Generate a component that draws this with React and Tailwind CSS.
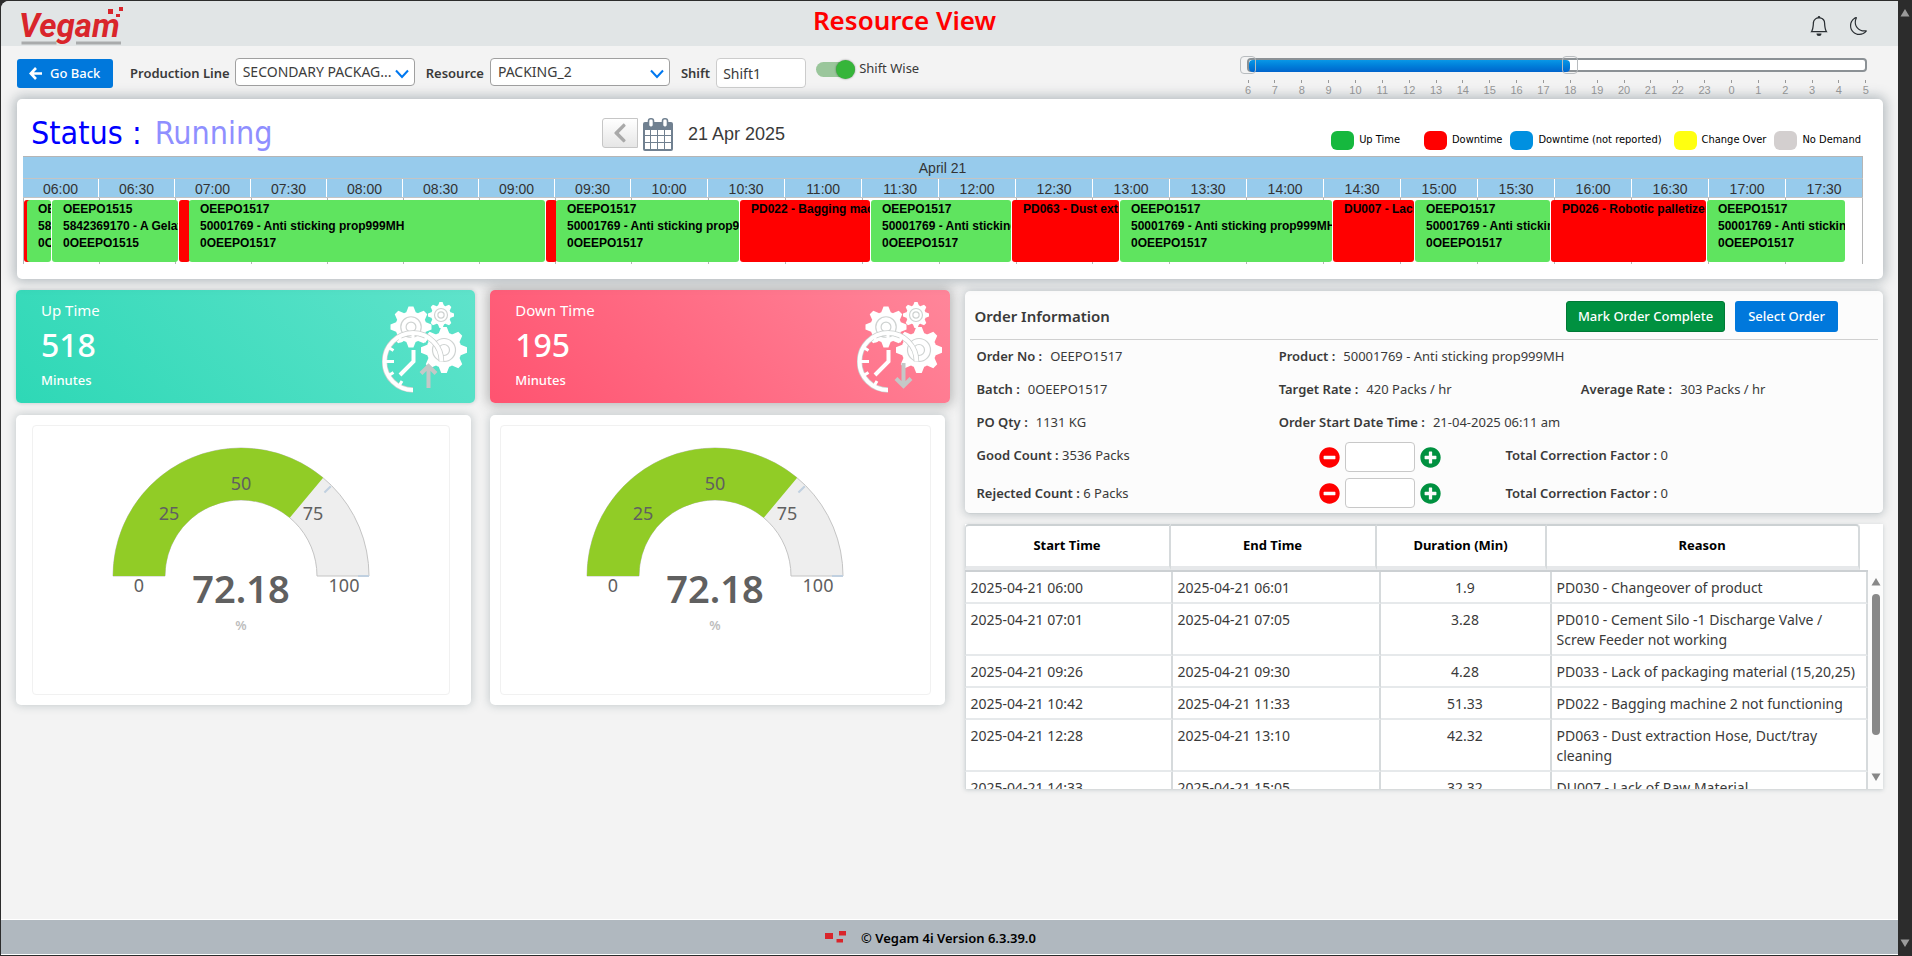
import React, { useState } from "react";
import { FaChevronLeft, FaMinusCircle, FaPlusCircle } from "react-icons/fa";
import { BsBell, BsMoon } from "react-icons/bs";

const HOURS = [6, 7, 8, 9, 10, 11, 12, 13, 14, 15, 16, 17, 18, 19, 20, 21, 22, 23, 0, 1, 2, 3, 4, 5];

const SLOTS = [
  "06:00", "06:30", "07:00", "07:30", "08:00", "08:30", "09:00", "09:30",
  "10:00", "10:30", "11:00", "11:30", "12:00", "12:30", "13:00", "13:30",
  "14:00", "14:30", "15:00", "15:30", "16:00", "16:30", "17:00", "17:30",
];

const PO_1517 = ["OEEPO1517", "50001769 - Anti sticking prop999MH", "0OEEPO1517"];
const PO_1515 = ["OEEPO1515", "5842369170 - A Gelatine", "0OEEPO1515"];

// from / to are on a 0-1840 scale, which is the full shift
const EVENTS = [
  { from: 1, to: 4, type: "down", lines: [] },
  { from: 4, to: 28, type: "up", lines: PO_1515 },
  { from: 29, to: 155, type: "up", lines: PO_1515 },
  { from: 156, to: 166, type: "down", lines: [] },
  { from: 166, to: 522, type: "up", lines: PO_1517 },
  { from: 523, to: 533, type: "down", lines: [] },
  { from: 533, to: 716, type: "up", lines: PO_1517 },
  { from: 717, to: 847, type: "down", lines: ["PD022 - Bagging machine 2 not functioning"] },
  { from: 848, to: 988, type: "up", lines: PO_1517 },
  { from: 989, to: 1096, type: "down", lines: ["PD063 - Dust extraction Hose"] },
  { from: 1097, to: 1309, type: "up", lines: PO_1517 },
  { from: 1310, to: 1391, type: "down", lines: ["DU007 - Lack of Raw Material"] },
  { from: 1392, to: 1527, type: "up", lines: PO_1517 },
  { from: 1528, to: 1683, type: "down", lines: ["PD026 - Robotic palletizer"] },
  { from: 1684, to: 1822, type: "up", lines: PO_1517 },
];

const LEGEND = [
  { label: "Up Time", color: "bg-[#16b83e]", space: "mr-6" },
  { label: "Downtime", color: "bg-[#ff0000]", space: "mr-2" },
  { label: "Downtime (not reported)", color: "bg-[#0090e0]", space: "mr-3" },
  { label: "Change Over", color: "bg-[#ffff10]", space: "mr-2" },
  { label: "No Demand", color: "bg-[#d3cfcf]", space: "" },
];

const DOWNTIMES = [
  ["2025-04-21 06:00", "2025-04-21 06:01", "1.9", "PD030 - Changeover of product"],
  ["2025-04-21 07:01", "2025-04-21 07:05", "3.28", "PD010 - Cement Silo -1 Discharge Valve / Screw Feeder not working"],
  ["2025-04-21 09:26", "2025-04-21 09:30", "4.28", "PD033 - Lack of packaging material (15,20,25)"],
  ["2025-04-21 10:42", "2025-04-21 11:33", "51.33", "PD022 - Bagging machine 2 not functioning"],
  ["2025-04-21 12:28", "2025-04-21 13:10", "42.32", "PD063 - Dust extraction Hose, Duct/tray cleaning"],
  ["2025-04-21 14:33", "2025-04-21 15:05", "32.32", "DU007 - Lack of Raw Material"],
];

const Logo = () => (
  <svg width="106" height="44" viewBox="0 0 106 44" aria-label="Vegam">
    <path d="M0.500 38.500h35v3h-35zM55 38.500h45v3h-45z" fill="#a9abac" />
    <text x="-2" y="34" fontFamily="Roboto, sans-serif" fontSize="33" fontWeight="700" fontStyle="italic" fill="#d9252b">
      Vegam
    </text>
    <path d="M87 6h5v5h-5zM98 4h4v4h-4zM95 11h4v3h-4z" fill="#d9252b" />
  </svg>
);

const BackArrow = () => (
  <svg width="13" height="13" viewBox="0 0 13 13" fill="none" stroke="#fff" strokeWidth="2.600">
    <path d="M7 1L1.800 6.500 7 12M2 6.500h11" />
  </svg>
);

const CalendarIcon = () => (
  <svg width="30" height="33" viewBox="0 0 30 33">
    <path fill="#708090" fillRule="evenodd" d="M2 4h26a2 2 0 0 1 2 2v25a2 2 0 0 1-2 2H2a2 2 0 0 1-2-2V6a2 2 0 0 1 2-2zM2 12v5h5v-5zM8 12v5h6v-5zM15 12v5h6v-5zM22 12v5h6v-5zM2 18v6h5v-6zM8 18v6h6v-6zM15 18v6h6v-6zM22 18v6h6v-6zM2 25v6h5v-6zM8 25v6h6v-6zM15 25v6h6v-6zM22 25v6h6v-6z" />
    <rect x="5.500" y="0.800" width="5" height="8.500" rx="2.200" fill="#fff" stroke="#708090" strokeWidth="1.600" />
    <rect x="19.500" y="0.800" width="5" height="8.500" rx="2.200" fill="#fff" stroke="#708090" strokeWidth="1.600" />
  </svg>
);

const Gear = ({ cx, cy, r }) => {
  const angles = [0, 45, 90, 135, 180, 225, 270, 315];
  return (
    <g transform={`translate(${cx} ${cy})`}>
      <circle r={r * 0.76} fill="#fff" />
      {angles.map((a) => (
        <path
          key={a}
          transform={`rotate(${a})`}
          d={`M${-r * 0.24} ${-r * 0.7}L${-r * 0.12} ${-r}H${r * 0.12}L${r * 0.24} ${-r * 0.7}z`}
          fill="#fff"
        />
      ))}
      <circle r={r * 0.5} fill="none" stroke="#cfd3d2" strokeWidth="1.200" />
      <circle r={r * 0.24} fill="none" stroke="#cfd3d2" strokeWidth="1.200" />
    </g>
  );
};

const ClockGears = ({ direction }) => (
  <svg width="86" height="92" viewBox="0 0 86 92" fill="none">
    <Gear cx={29} cy={25} r={20.5} />
    <Gear cx={59} cy={13} r={13} />
    <Gear cx={62} cy={48} r={23} />
    <path d="M31 88A28.500 28.500 0 1 1 59.500 59.500" stroke="#c9cdcc" strokeWidth="5.500" />
    <path d="M31 88A28.500 28.500 0 1 1 59.500 59.500" stroke="#fff" strokeWidth="4" />
    <path d="M31 33v8M3 59.500h9M6.500 45.500l5 3M17 35l3 5M45 35l-3 5M6.500 73.500l5-3M17 84l3-5" stroke="#fff" strokeWidth="3" />
    <path d="M31.500 48v11.500L18 73" stroke="#fff" strokeWidth="4" />
    {direction === "up" ? (
      <path d="M46.500 86V64M39 71.500l7.500-7.500 7.500 7.500" stroke="#c4c8c7" strokeWidth="4" />
    ) : (
      <path d="M46.500 61v23M39 76.500l7.500 7.500 7.500-7.500" stroke="#c4c8c7" strokeWidth="4" />
    )}
  </svg>
);

const StatCard = ({ title, value, direction, className }) => (
  <div className={`flex justify-between rounded-[5px] h-[113px] pl-[25px] pr-[7px] text-white ${className}`}>
    <div className="flex flex-col pt-2">
      <span className="text-[15px] leading-6">{title}</span>
      <span className="text-[32px] leading-[46px] font-medium">{value}</span>
      <span className="text-[13px] leading-6 font-medium">Minutes</span>
    </div>
    <div className="pt-3">
      <ClockGears direction={direction} />
    </div>
  </div>
);

const Gauge = ({ value }) => {
  const cx = 150;
  const cy = 150;
  const point = (r, pct) => {
    const a = Math.PI * (1 - pct / 100);
    return `${cx + r * Math.cos(a)} ${cy - r * Math.sin(a)}`;
  };
  const band = (from, to) =>
    `M${point(128, from)}A128 128 0 0 1 ${point(128, to)}L${point(76, to)}A76 76 0 0 0 ${point(76, from)}z`;

  return (
    <svg width="300" height="230" viewBox="0 0 300 230" className="mx-auto" fontFamily="'Noto Sans', sans-serif" textAnchor="middle">
      <path d={band(0, 100)} fill="#eeeeee" stroke="#c4c4c4" />
      <path d={band(0, value)} fill="#91cc26" />
      <path d={`M${point(118, 75)}L${point(127, 75)}M267 150h11`} stroke="#c0d0e0" strokeWidth="2" />
      <g fontSize="18" fill="#606060">
        <text x="48" y="166">0</text>
        <text x="78" y="94">25</text>
        <text x="150" y="64">50</text>
        <text x="222" y="94">75</text>
        <text x="253" y="166">100</text>
      </g>
      <text x="150" y="177" fontSize="38" fontWeight="600" fill="#606060">{value}</text>
      <text x="150" y="204" fontSize="13" fill="#bdbdbd" fontWeight="600">%</text>
    </svg>
  );
};

const GaugeCard = ({ className, innerClass }) => (
  <div className={`bg-white rounded-[5px] h-[290px] mt-3 pt-[10px] shadow-[0_0_8px_1px_rgba(69,90,100,0.25)] ${className}`}>
    <div className={`h-[270px] rounded border border-[#f1f1f1] ${innerClass}`}>
      <Gauge value={72.18} />
    </div>
  </div>
);

const SelectBox = ({ id, value, options }) => (
  <div className="relative w-[180px] shrink-0">
    <select
      id={id}
      defaultValue={value}
      className="appearance-none w-full h-7 rounded border border-[#a0a0a0] bg-white pl-[7px] pr-5 text-sm text-[#3c3c3c]"
    >
      {options.map((o) => (
        <option key={o}>{o}</option>
      ))}
    </select>
    <svg width="14" height="10" viewBox="0 0 14 10" className="absolute right-[6px] top-[11px] pointer-events-none">
      <path d="M1 1.500l6 6.500 6-6.500" fill="none" stroke="#0078f0" strokeWidth="2" />
    </svg>
  </div>
);

const ShiftRange = () => {
  const [from, setFrom] = useState(0);
  const [to, setTo] = useState(12);
  const rangeClass =
    "absolute left-0 top-0 w-full h-[18px] appearance-none bg-transparent pointer-events-none [&::-webkit-slider-thumb]:pointer-events-auto [&::-webkit-slider-thumb]:appearance-none [&::-webkit-slider-thumb]:w-4 [&::-webkit-slider-thumb]:h-[18px] [&::-webkit-slider-thumb]:rounded [&::-webkit-slider-thumb]:border [&::-webkit-slider-thumb]:border-[#b8bcbf]";

  return (
    <div className="w-[35%] max-w-[634px] ml-auto mr-6 -mt-0.5">
      <div className="relative py-0.5">
        <div className="h-[14px] mx-[7px] rounded border-2 border-[#8b9195] bg-white">
          <div
            className="h-3 rounded-sm bg-linear-to-b from-[#0a97e6] to-[#0064cc]"
            style={{ marginLeft: `${(from / 23) * 100}%`, width: `${((to - from) / 23) * 100}%` }}
          ></div>
        </div>
        <input type="range" aria-label="From hour" min="0" max="23" value={from} onChange={(e) => setFrom(Math.min(+e.target.value, to))} className={rangeClass} />
        <input type="range" aria-label="To hour" min="0" max="23" value={to} onChange={(e) => setTo(Math.max(+e.target.value, from))} className={rangeClass} />
      </div>
      <div className="flex justify-between mt-1.5 font-['Liberation_Sans',sans-serif] text-[11px] leading-[14px] text-[#999]">
        {HOURS.map((h) => (
          <div key={h} className="flex flex-col items-center w-4">
            <span className="w-px h-[3px] bg-[#999]"></span>
            <span>{h}</span>
          </div>
        ))}
      </div>
    </div>
  );
};

const Timeline = () => {
  // slots up to 09:30 are a touch narrower than the later ones
  const slotWidth = (i) => (i < 8 ? "flex-[76]" : "flex-[77]");

  return (
    <div className="mr-5 ml-1.5 font-['Liberation_Sans',sans-serif] text-sm text-[#333]">
      <div className="h-[22px] leading-[22px] text-center bg-[#97cbec] border-t border-r border-[#b5b5b5]">April 21</div>
      <div className="flex h-5 bg-[#97cbec] border-y border-[#c4c4c4]">
        {SLOTS.map((s, i) => (
          <div key={s} className={`${slotWidth(i)} text-center leading-5 border-r border-white last:border-[#b5b5b5]`}>{s}</div>
        ))}
      </div>
      <div className="relative h-[66px]">
        <div className="flex h-full border-l border-[#b5b5b5]">
          {SLOTS.map((s, i) => (
            <div key={s} className={`${slotWidth(i)} border-r border-[#b5b5b5]`}></div>
          ))}
        </div>
        {EVENTS.map((e) => (
          <div
            key={e.from}
            className={`absolute top-0.5 h-[62px] rounded-[3px] overflow-hidden pt-px pl-[11px] font-bold text-xs leading-[17px] text-black whitespace-nowrap ${
              e.type === "up" ? "bg-[#5fe45f]" : "bg-[#ff0000]"
            }`}
            style={{ left: `${(e.from / 1840) * 100}%`, width: `${((e.to - e.from) / 1840) * 100}%` }}
          >
            {e.lines.map((l) => (
              <div key={l}>{l}</div>
            ))}
          </div>
        ))}
      </div>
    </div>
  );
};

const Field = ({ label, children }) => (
  <div className="w-1/3 whitespace-nowrap">
    <span className="font-semibold mr-2">{label} :</span>
    <span>{children}</span>
  </div>
);

const CountRow = ({ id, label, value, className }) => (
  <div className={`flex pt-[3px] h-[35px] leading-[26px] ${className}`}>
    <label htmlFor={id} className="w-[342px]">
      <b className="font-semibold">{label} :</b> {value}
    </label>
    <div className="flex items-center gap-[5px] w-[187px]">
      <button aria-label={`Decrease ${label}`} className="text-[#ff0000]">
        <FaMinusCircle size={21} />
      </button>
      <input id={id} className="w-[70px] h-[30px] rounded border border-[#c8c8c8] bg-white" />
      <button aria-label={`Increase ${label}`} className="text-[#009140]">
        <FaPlusCircle size={21} />
      </button>
    </div>
    <span>
      <b className="font-semibold">Total Correction Factor :</b> 0
    </span>
  </div>
);

const OrderInformation = () => (
  <section className="h-[223px] rounded-[5px] border-b border-[#ccd1d3] bg-[#fcfcfc] pt-2.5 text-[13px] text-[#3a3a3a] shadow-[0_0_8px_1px_rgba(69,90,100,0.3)]">
    <div className="flex items-center mx-[5px] pl-[5px] pb-[7px] border-b border-[#d0d0d0]">
      <h2 className="flex-1 text-[15px] font-semibold">Order Information</h2>
      <button className="h-[31px] px-[11px] mr-2.5 rounded-[3px] bg-[#009140] border border-[#007a36] text-white font-medium">Mark Order Complete</button>
      <button className="h-[31px] px-[13px] mr-10 rounded-[3px] bg-[#0078dc] text-white font-medium">Select Order</button>
    </div>
    <div className="pl-3 leading-[33px]">
      <div className="flex">
        <Field label="Order No">OEEPO1517</Field>
        <Field label="Product">50001769 - Anti sticking prop999MH</Field>
      </div>
      <div className="flex">
        <Field label="Batch">0OEEPO1517</Field>
        <Field label="Target Rate">420 Packs / hr</Field>
        <Field label="Average Rate">303 Packs / hr</Field>
      </div>
      <div className="flex">
        <Field label="PO Qty">1131 KG</Field>
        <Field label="Order Start Date Time">21-04-2025 06:11 am</Field>
      </div>
      <CountRow id="good" label="Good Count" value="3536 Packs" className="items-start" />
      <CountRow id="rejected" label="Rejected Count" value="6 Packs" className="items-center" />
    </div>
  </section>
);

const DowntimeTable = () => (
  <section className="mt-2.5 bg-white shadow-[0_1px_4px_rgba(69,90,100,0.25)]">
    <table className="table-fixed w-[895px] border-separate border-spacing-0 text-[13px] text-black">
      <thead>
        <tr className="[&>th]:h-[46px] [&>th]:border-t-2 [&>th]:border-b-4 [&>th]:border-r-2 [&>th]:border-t-[#ccd1d3] [&>th]:border-b-[#e6e8ea] [&>th]:border-r-[#d6dadc]">
          <th className="w-[206px] font-bold border-l border-l-[#d6dadc] rounded-tl">Start Time</th>
          <th className="w-[206px] font-bold">End Time</th>
          <th className="w-[170px] font-bold">Duration (Min)</th>
          <th className="font-bold rounded-tr">Reason</th>
        </tr>
      </thead>
    </table>
    <div className="flex h-[219px] overflow-hidden">
      <div className="flex-1">
        <table aria-label="Downtime reasons" className="table-fixed w-full border-separate border-spacing-0 border-t-2 border-[#ccd0d3] text-sm leading-5 text-[#3a3a3a]">
          <colgroup>
            <col className="w-[208px]" />
            <col className="w-[208px]" />
            <col className="w-[171px]" />
            <col />
          </colgroup>
          <tbody>
            {DOWNTIMES.map((row) => (
              <tr
                key={row[0]}
                className="[&>td]:pt-1.5 [&>td]:pb-1 [&>td]:px-[5px] [&>td]:align-top [&>td]:border-b-2 [&>td]:border-r-2 [&>td]:border-b-[#e6e9eb] [&>td]:border-r-[#d6dadc]"
              >
                <td className="border-l border-l-[#d6dadc]">{row[0]}</td>
                <td>{row[1]}</td>
                <td className="text-center">{row[2]}</td>
                <td>{row[3]}</td>
              </tr>
            ))}
          </tbody>
        </table>
      </div>
      <div className="flex flex-col items-center w-[15px] pt-2 pb-2 bg-[#fcfcfc]">
        <svg width="10" height="8" viewBox="0 0 10 8"><path d="M5 0l4.500 7.500h-9z" fill="#888" /></svg>
        <div className="w-2 h-[141px] mt-2 rounded-full bg-[#888]"></div>
        <svg width="10" height="8" viewBox="0 0 10 8" className="mt-auto"><path d="M5 8L0.500 0.500h9z" fill="#888" /></svg>
      </div>
    </div>
  </section>
);

const App = () => {
  const [shiftWise, setShiftWise] = useState(true);

  return (
    <div className="flex min-h-screen bg-[#2c2c2c] pt-px pl-px pb-px font-['Noto_Sans',sans-serif]">
      <div className="flex flex-col flex-1 bg-[#f3f3f3] rounded-tl-lg overflow-hidden">
        <header className="flex items-start h-[45px] bg-[#e1e5e6]">
          <div className="w-[240px] pl-5 pt-0.5">
            <Logo />
          </div>
          <h1 className="flex-1 pr-[90px] text-center text-[26px] leading-[38px] font-semibold text-[#ff0000]">Resource View</h1>
          <div className="flex justify-end items-center gap-[21px] w-[240px] pt-[15px] pr-[30px] text-[#2a2f33]">
            <button aria-label="Notifications"><BsBell size={20} /></button>
            <button aria-label="Dark mode"><BsMoon size={18} /></button>
          </div>
        </header>

        <div className="flex items-start h-[53px] pt-3 pl-4 text-[13px] text-[#3a3a3a]">
          <button className="flex items-center gap-2 h-[29px] w-24 pl-3 mt-px rounded-[3px] bg-[#0078dc] font-medium text-white shrink-0">
            <BackArrow />
            Go Back
          </button>
          <label htmlFor="line" className="ml-[17px] mr-[5px] font-semibold leading-[30px] whitespace-nowrap">Production Line</label>
          <SelectBox id="line" value="SECONDARY PACKAG..." options={["SECONDARY PACKAG...", "PRIMARY PACKAGING"]} />
          <label htmlFor="resource" className="ml-[11px] mr-1.5 font-semibold leading-[30px]">Resource</label>
          <SelectBox id="resource" value="PACKING_2" options={["PACKING_1", "PACKING_2"]} />
          <label htmlFor="shift" className="ml-[11px] mr-1.5 font-semibold leading-[30px]">Shift</label>
          <input id="shift" defaultValue="Shift1" className="w-[90px] h-[30px] pl-1.5 rounded border border-[#cccccc] bg-white text-sm" />
          <label className="flex items-center gap-1 ml-2.5 h-[22px] whitespace-nowrap">
            <input
              type="checkbox"
              checked={shiftWise}
              onChange={(e) => setShiftWise(e.target.checked)}
              className="relative appearance-none w-[39px] h-[15px] rounded-full bg-[#b5b5b5] checked:bg-[#9ac69b] before:absolute before:-top-0.5 before:left-0 checked:before:left-5 before:size-[19px] before:rounded-full before:bg-[#36b53a] before:shadow-[0_0_2px_rgba(0,0,0,0.5)]"
            />
            Shift Wise
          </label>
          <ShiftRange />
        </div>

        <section className="relative h-[180px] mx-4 mr-[15px] rounded-[5px] bg-white shadow-[0_0_12px_3px_rgba(69,90,100,0.35)]">
          <div className="flex items-center h-[57px] pl-[14px] pr-[22px]">
            <div className="w-[571px] pt-3 font-['DejaVu_Sans_Condensed','DejaVu_Sans',sans-serif] text-[32px] leading-[45px] text-[#0000ff]">
              Status : <span className="ml-1 text-[#8f8fff]">Running</span>
            </div>
            <button aria-label="Previous day" className="flex items-center justify-center w-9 h-[30px] mt-[11px] rounded-l-[3px] border border-[#c6c6c6] bg-linear-to-b from-white to-[#e6e6e6] text-[#a9a9a9]">
              <FaChevronLeft size={22} />
            </button>
            <button aria-label="Pick a date" className="ml-[5px] mt-[14px]">
              <CalendarIcon />
            </button>
            <span className="ml-[15px] mt-3 font-['Liberation_Sans',sans-serif] text-lg text-[#3a3a3a]">21 Apr 2025</span>
            <div className="flex items-center ml-auto mt-[26px] font-['DejaVu_Sans_Condensed','DejaVu_Sans',sans-serif] text-[11px] text-black">
              {LEGEND.map((l) => (
                <div key={l.label} className={`flex items-center gap-[5px] ${l.space}`}>
                  <span className={`w-[23px] h-[19px] rounded-md ${l.color}`}></span>
                  {l.label}
                </div>
              ))}
            </div>
          </div>
          <Timeline />
        </section>

        <main className="flex mt-[11px] pb-10">
          <div className="w-1/4 pl-[15px]">
            <StatCard title="Up Time" value="518" direction="up" className="bg-linear-[45deg,#2ed8b6,#5fe3cb] shadow-[0_0_4px_rgba(69,90,100,0.3)]" />
            <GaugeCard className="mr-1" innerClass="ml-4 mr-[21px]" />
          </div>
          <div className="w-1/4 pl-[15px]">
            <StatCard title="Down Time" value="195" direction="down" className="bg-linear-[45deg,#ff5370,#ff869a] shadow-[0_0_12px_3px_rgba(80,80,80,0.35)]" />
            <GaugeCard className="mr-[5px]" innerClass="ml-2.5 mr-[14px]" />
          </div>
          <div className="w-1/2 pt-px pl-[15px] pr-[15px]">
            <OrderInformation />
            <DowntimeTable />
          </div>
        </main>

        <footer className="flex items-center justify-center gap-3.5 h-9 mt-auto border-y border-white bg-[#b0b8bf] pt-1 pr-[38px] text-[13px] font-semibold text-black">
          <svg width="22" height="14" viewBox="0 0 22 14" className="mb-1">
            <path d="M0 3h8v6H0zM14 1h7v4.500h-7zM11.500 9h6.500v3.500h-6.500z" fill="#d9252b" />
          </svg>
          © Vegam 4i Version 6.3.39.0
        </footer>
      </div>

      <div className="flex flex-col justify-between items-center w-3.5 pt-2 pb-2">
        <svg width="10" height="8" viewBox="0 0 10 8"><path d="M5 0l4.500 7.500h-9z" fill="#9a9a9a" /></svg>
        <svg width="10" height="8" viewBox="0 0 10 8"><path d="M5 8L0.500 0.500h9z" fill="#9a9a9a" /></svg>
      </div>
    </div>
  );
};

export default App;
